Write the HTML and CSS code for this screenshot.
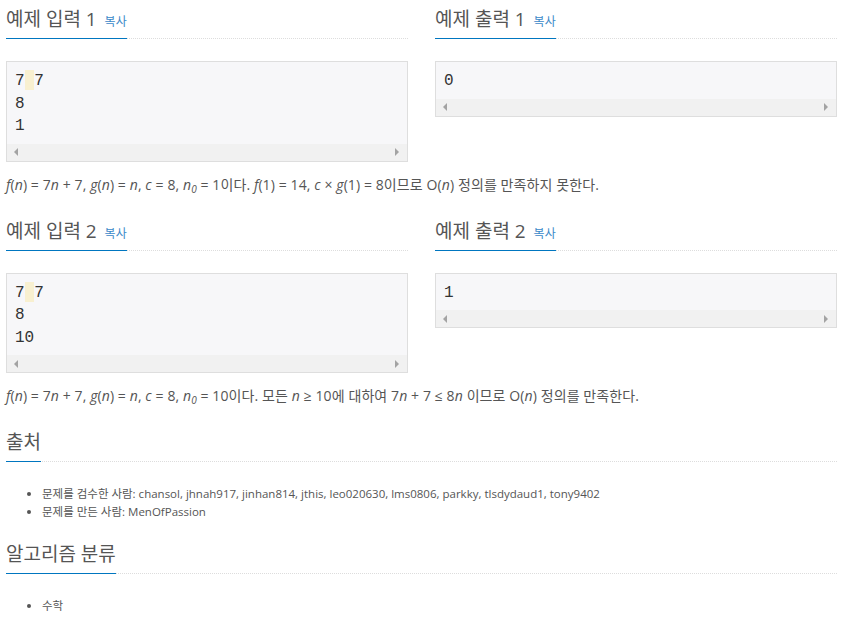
FILE: index.html
```html
<!DOCTYPE html>
<html lang="ko">
<head>
<meta charset="utf-8">
<title>문제</title>
<link rel="stylesheet" href="styles.css">
</head>
<body>
<div class="page">
  <div class="sample-row">
    <section class="sample">
      <h2 class="headline"><span class="headline-text">예제 입력 1 <button class="copy">복사</button></span></h2>
      <div class="sample-box">
        <pre class="sample-data"><span class="mark"></span>7 7
8
1</pre>
        <div class="hscroll"><span class="arrow left"></span><span class="arrow right"></span></div>
      </div>
    </section>
    <section class="sample">
      <h2 class="headline"><span class="headline-text">예제 출력 1 <button class="copy">복사</button></span></h2>
      <div class="sample-box">
        <pre class="sample-data">0</pre>
        <div class="hscroll"><span class="arrow left"></span><span class="arrow right"></span></div>
      </div>
    </section>
  </div>
  <p class="explain"><i>f</i>(<i>n</i>) = 7<i>n</i> + 7, <i>g</i>(<i>n</i>) = <i>n</i>, <i>c</i> = 8, <i>n</i><sub><i>0</i></sub> = 1이다. <i>f</i>(1) = 14, <i>c</i> × <i>g</i>(1) = 8이므로 O(<i>n</i>) 정의를 만족하지 못한다.</p>

  <div class="sample-row">
    <section class="sample">
      <h2 class="headline"><span class="headline-text">예제 입력 2 <button class="copy">복사</button></span></h2>
      <div class="sample-box">
        <pre class="sample-data"><span class="mark"></span>7 7
8
10</pre>
        <div class="hscroll"><span class="arrow left"></span><span class="arrow right"></span></div>
      </div>
    </section>
    <section class="sample">
      <h2 class="headline"><span class="headline-text">예제 출력 2 <button class="copy">복사</button></span></h2>
      <div class="sample-box">
        <pre class="sample-data">1</pre>
        <div class="hscroll"><span class="arrow left"></span><span class="arrow right"></span></div>
      </div>
    </section>
  </div>
  <p class="explain"><i>f</i>(<i>n</i>) = 7<i>n</i> + 7, <i>g</i>(<i>n</i>) = <i>n</i>, <i>c</i> = 8, <i>n</i><sub><i>0</i></sub> = 10이다. 모든 <i>n</i> ≥ 10에 대하여 7<i>n</i> + 7 ≤ 8<i>n</i> 이므로 O(<i>n</i>) 정의를 만족한다.</p>

  <section class="block">
    <h2 class="headline"><span class="headline-text">출처</span></h2>
    <ul class="info-list">
      <li>문제를 검수한 사람: chansol, jhnah917, jinhan814, jthis, leo020630, lms0806, parkky, tlsdydaud1, tony9402</li>
      <li>문제를 만든 사람: MenOfPassion</li>
    </ul>
  </section>

  <section class="block">
    <h2 class="headline"><span class="headline-text">알고리즘 분류</span></h2>
    <ul class="info-list">
      <li>수학</li>
    </ul>
  </section>
</div>
</body>
</html>
```

FILE: styles.css
```css
* { box-sizing: border-box; }

html, body {
  margin: 0;
  padding: 0;
  background: #fff;
}

body {
  font-family: "Open Sans", "Noto Sans CJK KR", sans-serif;
  color: #555;
}

.page {
  padding: 9px 12px 0 6px;
}

.sample-row {
  display: grid;
  grid-template-columns: 1fr 1fr;
  column-gap: 27px;
  align-items: start;
}

.headline {
  margin: 0 0 22px;
  font-size: 19px;
  font-weight: 400;
  line-height: 20px;
  color: #555;
  border-bottom: 1px dotted #ddd;
  display: flex;
}

.block .headline {
  margin-bottom: 23px;
}

.headline-text {
  display: inline-block;
  height: 30px;
  padding-bottom: 9px;
  border-bottom: 1px solid #0076c0;
  margin-bottom: -1px;
  white-space: nowrap;
}

.copy {
  font-family: "Open Sans", "Noto Sans CJK KR", sans-serif;
  font-size: 12px;
  color: #3b88c8;
  background: none;
  border: 0;
  padding: 0;
  margin: 0 0 0 3px;
  line-height: 12px;
  vertical-align: baseline;
  cursor: pointer;
}

.sample-box {
  border: 1px solid #dedede;
  background: #f7f7f9;
}

.sample-data {
  margin: 0;
  padding: 8px 8px 6px;
  font-family: "Liberation Mono", monospace;
  font-size: 16px;
  line-height: 22.5px;
  color: #333;
  white-space: pre;
  overflow: hidden;
}

.mark {
  display: inline-block;
  width: 9.6px;
  height: 20px;
  margin-left: 9.6px;
  margin-right: -19.2px;
  vertical-align: -5px;
  background: #f8f0d0;
}

.hscroll {
  height: 17px;
  background: #f1f1f1;
  display: flex;
  justify-content: space-between;
  align-items: center;
  padding: 0 8px 0 7px;
}

.arrow {
  width: 0;
  height: 0;
  border-top: 4px solid transparent;
  border-bottom: 4px solid transparent;
}

.arrow.left { border-right: 4px solid #a3a3a3; }
.arrow.right { border-left: 4px solid #a3a3a3; }

.explain {
  margin: 13px 0 26px;
  font-size: 14px;
  line-height: 20px;
  letter-spacing: 0.1px;
  color: #555;
}

.explain sub {
  font-size: 10px;
  line-height: 0;
  vertical-align: -3px;
}

.info-list {
  margin: 0 0 23px;
  padding-left: 36px;
  font-size: 11.5px;
  line-height: 18px;
  color: #555;
}
```
